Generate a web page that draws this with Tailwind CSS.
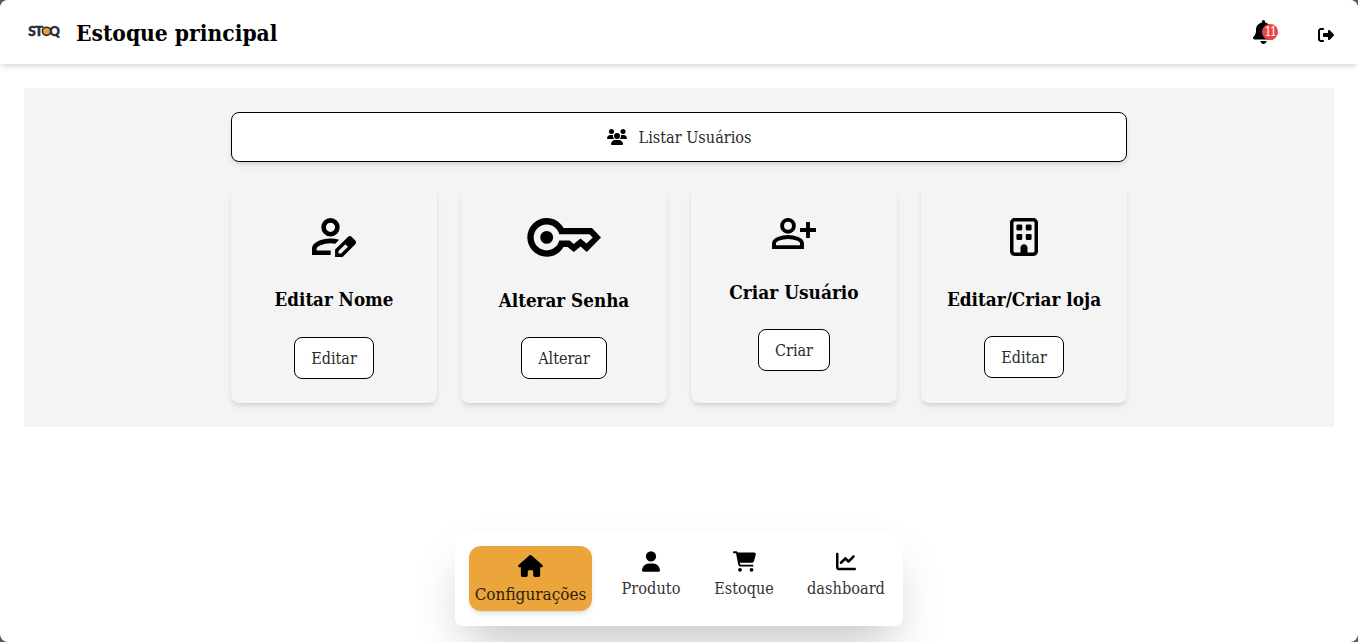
<!DOCTYPE html>
<html lang="pt-BR">
<head>
<meta charset="utf-8">
<title>Estoque principal</title>
<script src="https://cdn.jsdelivr.net/npm/@tailwindcss/browser@4"></script>
</head>
<body class="bg-[#58575c] font-['Roboto_Slab','DejaVu_Serif_Condensed','DejaVu_Serif',serif] text-base text-black">
<div class="flex h-[642px] flex-col overflow-hidden rounded-lg bg-white">
  <header class="flex h-16 shrink-0 items-center justify-between rounded-t-lg bg-white pr-6 pl-7 shadow-md">
    <div class="flex items-center">
      <svg class="h-4 w-8" viewBox="0 0 32 16" role="img" aria-label="STOQ">
        <g fill="#2b2a2e" stroke="#2b2a2e" stroke-width="0.5" font-family="Lato, sans-serif" font-weight="900" font-size="13.5">
          <text x="0.2" y="12" textLength="7.5" lengthAdjust="spacingAndGlyphs">S</text>
          <text x="6.8" y="12" textLength="8.4" lengthAdjust="spacingAndGlyphs">T</text>
          <text x="21.3" y="12" textLength="10.6" lengthAdjust="spacingAndGlyphs">Q</text>
        </g>
        <circle cx="18.5" cy="7.3" r="4.1" fill="#f0a02c" stroke="#2b2a2e" stroke-width="1.6"/>
      </svg>
      <h1 class="ml-4 pt-0.5 text-[22.6px] leading-8 font-bold whitespace-nowrap">Estoque principal</h1>
    </div>
    <div class="flex items-center">
      <div class="relative mr-11">
        <svg class="h-6 w-[21px]" viewBox="0 0 448 512"><path d="M224 0c-17.7 0-32 14.3-32 32V51.2C119 66 64 130.6 64 208v18.8c0 47-17.3 92.4-48.5 127.6l-7.4 8.3c-8.4 9.4-10.4 22.9-5.3 34.4S19.4 416 32 416H416c12.6 0 24-7.4 29.2-18.9s3.1-25-5.3-34.4l-7.4-8.3C401.3 319.2 384 273.9 384 226.8V208c0-77.4-55-142-128-156.8V32c0-17.7-14.3-32-32-32zm45.3 493.3c12-12 18.7-28.3 18.7-45.3H224 160c0 17 6.7 33.3 18.7 45.3s28.3 18.7 45.3 18.7s33.3-6.7 45.3-18.7z"/></svg>
        <span class="absolute top-1 -right-1 flex size-4 items-center justify-center rounded-full bg-[#ef4444] text-[12px] leading-none tracking-[-1.5px] text-white">11</span>
      </div>
      <svg class="mt-[5px] size-4" viewBox="0 0 512 512"><path d="M377.9 105.9L500.7 228.7c7.2 7.2 11.3 17.1 11.3 27.3s-4.1 20.1-11.3 27.3L377.9 406.1c-6.4 6.4-15 9.9-24 9.9c-18.7 0-33.9-15.2-33.9-33.9l0-62.1-128 0c-17.7 0-32-14.3-32-32l0-64c0-17.7 14.3-32 32-32l128 0 0-62.1c0-18.7 15.2-33.9 33.9-33.9c9 0 17.6 3.6 24 9.9zM160 96L96 96c-17.7 0-32 14.3-32 32l0 256c0 17.7 14.3 32 32 32l64 0c17.7 0 32 14.3 32 32s-14.3 32-32 32l-64 0c-53 0-96-43-96-96L0 128C0 75 43 32 96 32l64 0c17.7 0 32 14.3 32 32s-14.3 32-32 32z"/></svg>
    </div>
  </header>

  <main class="mx-6 mt-6 bg-gray-100 p-6">
    <div class="mx-auto w-4xl">
      <button class="flex h-[50px] w-full items-center justify-center gap-3 rounded-lg border border-black bg-white shadow-md">
        <svg class="h-4 w-5" viewBox="0 0 640 512"><path d="M144 0a80 80 0 1 1 0 160A80 80 0 1 1 144 0zM512 0a80 80 0 1 1 0 160A80 80 0 1 1 512 0zM0 298.7C0 239.8 47.8 192 106.7 192h42.7c15.9 0 31 3.5 44.6 9.7c-1.3 7.2-1.9 14.7-1.9 22.3c0 38.2 16.8 72.5 43.3 96c-.2 0-.4 0-.7 0H21.3C9.6 320 0 310.4 0 298.7zM405.3 320c-.2 0-.4 0-.7 0c26.6-23.5 43.3-57.8 43.3-96c0-7.6-.7-15-1.9-22.3c13.6-6.3 28.7-9.7 44.6-9.7h42.7C592.2 192 640 239.8 640 298.7c0 11.8-9.6 21.3-21.3 21.3H405.3zM224 224a96 96 0 1 1 192 0 96 96 0 1 1 -192 0zM128 485.3C128 411.7 187.7 352 261.3 352H378.7C452.3 352 512 411.7 512 485.3c0 14.7-11.9 26.7-26.7 26.7H154.7c-14.7 0-26.7-11.9-26.7-26.7z"/></svg>
        <span class="pt-0.5 text-[16.1px] font-light text-[#2a2a2a]">Listar Usuários</span>
      </button>

      <div class="mt-6 grid grid-cols-4 gap-6">
        <section class="flex h-[217px] flex-col items-center rounded-lg bg-[#f4f4f4] pt-8 shadow-md">
          <svg class="h-[39px] w-11" viewBox="0 0 44 39">
            <circle cx="18.5" cy="9.3" r="6.9" fill="none" stroke="#000" stroke-width="4.6"/>
            <path d="M0 37V30.6C0 24.5 9.5 20.6 18.5 20.6c3 0 5.9.4 8.6 1.2L23.3 25.8C21.8 25.4 20.2 25.2 18.5 25.2c-7.6 0-13.9 3.5-13.9 5.4V32.6H18.7V37z"/>
            <path fill-rule="evenodd" d="M23.1 39V31.5L35.9 18.9c1.2-1.1 2.8-1.1 3.9 0l3.5 3.5c1 1.1 1 2.7 0 3.8L30.6 39zM26.5 35.6h2.6L35.9 28.7 33.4 26.2 26.5 33z"/>
          </svg>
          <h2 class="mt-[29px] text-[18.6px] leading-7 font-bold whitespace-nowrap">Editar Nome</h2>
          <button class="mt-[23px] h-[42px] w-20 rounded-lg border border-black bg-white pt-0.5 font-light text-[#2a2a2a]">Editar</button>
        </section>

        <section class="flex h-[217px] flex-col items-center rounded-lg bg-[#f4f4f4] pt-8 shadow-md">
          <svg class="h-[39px] w-[74px]" viewBox="-0.5 0 74 39">
            <circle cx="19.2" cy="19.4" r="6.4"/>
            <path fill-rule="evenodd" d="M19.2 0C26.7 0 32.8 4 36 10H64.5L73.5 19.4 59.3 34.1 53 28.6 46.3 34 40 29H36C32.8 35 26.7 38.8 19.2 38.8A19.4 19.4 0 0 1 19.2 0zM19.2 6.4a13 13 0 1 0 0 26c6 0 11.1-4 12.6-9.8H42.2L46.2 25.9 53 20.6 59 25.6 65.3 19.4 62 16.2H31.8C30.3 10.4 25.2 6.4 19.2 6.4z"/>
          </svg>
          <h2 class="mt-[29px] text-[18.7px] leading-7 font-bold whitespace-nowrap">Alterar Senha</h2>
          <button class="mt-[23px] h-[42px] w-[86px] rounded-lg border border-black bg-white pt-0.5 font-light text-[#2a2a2a]">Alterar</button>
        </section>

        <section class="flex h-[217px] flex-col items-center rounded-lg bg-[#f4f4f4] pt-8 shadow-md">
          <svg class="h-[31px] w-11" viewBox="0 0 44 31" fill="none" stroke="#000">
            <circle cx="16" cy="7.8" r="5.9" stroke-width="3.9"/>
            <path stroke-width="3.9" d="M2 29.1V25.2C2 21.5 9.5 19 16 19S30 21.5 30 25.2V29.1z"/>
            <path stroke-width="3.8" d="M36 4V20M28 12H44"/>
          </svg>
          <h2 class="mt-[29px] text-[18.9px] leading-7 font-bold whitespace-nowrap">Criar Usuário</h2>
          <button class="mt-[23px] h-[42px] w-[72px] rounded-lg border border-black bg-white pt-0.5 font-light text-[#2a2a2a]">Criar</button>
        </section>

        <section class="flex h-[217px] flex-col items-center rounded-lg bg-[#f4f4f4] pt-8 shadow-md">
          <svg class="h-[38px] w-7" viewBox="0 0 384 512" preserveAspectRatio="none"><path d="M64 48c-8.8 0-16 7.2-16 16V448c0 8.8 7.2 16 16 16h80V400c0-26.5 21.5-48 48-48s48 21.5 48 48v64h80c8.8 0 16-7.2 16-16V64c0-8.8-7.2-16-16-16H64zM0 64C0 28.7 28.7 0 64 0H320c35.3 0 64 28.7 64 64V448c0 35.3-28.7 64-64 64H64c-35.3 0-64-28.7-64-64V64zm88 40c0-8.8 7.2-16 16-16h48c8.8 0 16 7.2 16 16v48c0 8.8-7.2 16-16 16H104c-8.8 0-16-7.2-16-16V104zM232 88h48c8.8 0 16 7.2 16 16v48c0 8.8-7.2 16-16 16H232c-8.8 0-16-7.2-16-16V104c0-8.8 7.2-16 16-16zM88 232c0-8.8 7.2-16 16-16h48c8.8 0 16 7.2 16 16v48c0 8.8-7.2 16-16 16H104c-8.8 0-16-7.2-16-16V232zm144-16h48c8.8 0 16 7.2 16 16v48c0 8.8-7.2 16-16 16H232c-8.8 0-16-7.2-16-16V232c0-8.8 7.2-16 16-16z"/></svg>
          <h2 class="mt-[29px] text-[18.8px] leading-7 font-bold whitespace-nowrap">Editar/Criar loja</h2>
          <button class="mt-[23px] h-[42px] w-20 rounded-lg border border-black bg-white pt-0.5 font-light text-[#2a2a2a]">Editar</button>
        </section>
      </div>
    </div>
  </main>

  <nav class="mx-auto mt-auto mb-4 flex h-[94px] w-[448px] items-start rounded-lg bg-white pt-3.5 pl-3.5 font-light text-[#333] shadow-2xl">
    <a class="flex h-[65px] w-[123px] flex-col items-center rounded-xl bg-[#eba53b] pt-[9px] text-[17px] text-[#2b1e0b] shadow-md">
      <svg class="h-[22px] w-[25px] fill-black" viewBox="0 0 576 512"><path d="M575.8 255.5c0 18-15 32.1-32 32.1h-32l.7 160.2c0 2.7-.2 5.4-.5 8.1V472c0 22.1-17.9 40-40 40H456c-1.1 0-2.2 0-3.3-.1c-1.4 .1-2.8 .1-4.2 .1H416 392c-22.1 0-40-17.9-40-40V448 384c0-17.7-14.3-32-32-32H256c-17.7 0-32 14.3-32 32v64 24c0 22.1-17.9 40-40 40H160 128.1c-1.5 0-3-.1-4.5-.2c-1.2 .1-2.4 .2-3.6 .2H104c-22.1 0-40-17.9-40-40V360c0-.9 0-1.9 .1-2.8V287.6H32c-18 0-32-14-32-32.1c0-9 3-17 10-24L266.4 8c7-7 15-8 22-8s15 2 21 7L564.8 231.5c8 7 12 15 11 24z"/></svg>
      <span class="mt-1 leading-[26px]">Configurações</span>
    </a>
    <a class="mt-[5px] ml-[29px] flex w-[60px] flex-col items-center">
      <svg class="h-[21px] w-[18px] fill-black" viewBox="0 0 448 512"><path d="M224 256A128 128 0 1 0 224 0a128 128 0 1 0 0 256zm-45.7 48C79.8 304 0 383.8 0 482.3C0 498.7 13.3 512 29.7 512H418.3c16.4 0 29.7-13.3 29.7-29.7C448 383.8 368.2 304 269.7 304H178.3z"/></svg>
      <span class="mt-[5px] text-[16.2px] leading-6">Produto</span>
    </a>
    <a class="mt-[5px] ml-8 flex w-[62px] flex-col items-center">
      <svg class="h-[21px] w-[23px] fill-black" viewBox="0 0 576 512"><path d="M0 24C0 10.7 10.7 0 24 0H69.5c22 0 41.5 12.8 50.6 32h411c26.3 0 45.5 25 38.6 50.4l-41 152.3c-8.5 31.4-37 53.3-69.5 53.3H170.7l5.4 28.5c2.2 11.3 12.1 19.5 23.6 19.5H488c13.3 0 24 10.7 24 24s-10.7 24-24 24H199.7c-34.6 0-64.3-24.6-70.7-58.5L77.4 54.5c-.7-3.8-4-6.5-7.9-6.5H24C10.7 48 0 37.3 0 24zM128 464a48 48 0 1 1 96 0 48 48 0 1 1 -96 0zm336-48a48 48 0 1 1 0 96 48 48 0 1 1 0-96z"/></svg>
      <span class="mt-[5px] leading-6">Estoque</span>
    </a>
    <a class="mt-[5px] ml-[31px] flex w-20 flex-col items-center">
      <svg class="h-[21px] w-5 fill-black" viewBox="0 0 512 512"><path d="M64 64c0-17.7-14.3-32-32-32S0 46.3 0 64V400c0 44.2 35.8 80 80 80H480c17.7 0 32-14.3 32-32s-14.3-32-32-32H80c-8.8 0-16-7.2-16-16V64zm406.6 86.6c12.5-12.5 12.5-32.8 0-45.3s-32.8-12.5-45.3 0L320 210.7l-57.4-57.4c-12.5-12.5-32.8-12.5-45.3 0l-112 112c-12.5 12.5-12.5 32.8 0 45.3s32.8 12.5 45.3 0L240 221.3l57.4 57.4c12.5 12.5 32.8 12.5 45.3 0l128-128z"/></svg>
      <span class="mt-[5px] text-[16.2px] leading-6">dashboard</span>
    </a>
  </nav>
</div>
</body>
</html>
